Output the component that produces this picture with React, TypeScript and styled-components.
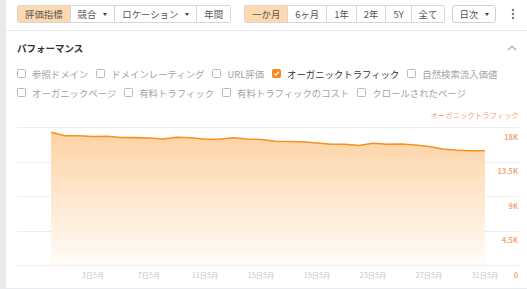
import React from 'react';
import styled, { createGlobalStyle } from 'styled-components';

const Global = createGlobalStyle`
  html, body { margin: 0; padding: 0; }
  body {
    background: #e9eaed;
    font-family: "Noto Sans CJK JP", "Noto Sans", sans-serif;
    width: 527px;
    height: 289px;
    overflow: hidden;
  }
`;

const Page = styled.div`
  margin-left: 6px;
  width: 521px;
  height: 288px;
  background: #fff;
  display: flex;
  flex-direction: column;
`;

const Toolbar = styled.div`
  height: 31px;
  box-sizing: border-box;
  border-bottom: 1px solid #e7e8eb;
  display: flex;
  align-items: flex-start;
  padding: 5px 0 0 11px;
`;

const Group = styled.div<{ $gap?: number }>`
  display: flex;
  border: 1px solid #d6d6d6;
  border-radius: 2px;
  overflow: hidden;
  margin-left: ${(p) => p.$gap ?? 0}px;
`;

const Segment = styled.div<{ $active?: boolean }>`
  display: flex;
  align-items: center;
  gap: 7px;
  height: 16px;
  padding: 0 7px;
  font-size: 9.4px;
  line-height: 16px;
  color: #555;
  background: ${(p) => (p.$active ? '#fed8ae' : '#fff')};
  & + & {
    border-left: 1px solid #d6d6d6;
  }
`;

const Caret = styled.span`
  width: 0;
  height: 0;
  border-left: 2.5px solid transparent;
  border-right: 2.5px solid transparent;
  border-top: 3.5px solid #444;
`;

const Dropdown = styled.div`
  display: flex;
  align-items: center;
  gap: 7px;
  height: 16px;
  margin-left: 7px;
  padding: 0 6px;
  border: 1px solid #d0d0d0;
  border-radius: 3px;
  font-size: 9.4px;
  line-height: 16px;
  color: #555;
`;

const MoreButton = styled.div`
  margin-left: 15px;
  height: 18px;
  display: flex;
  align-items: center;
`;

const Card = styled.div`
  flex: 1;
  display: flex;
  flex-direction: column;
  padding: 0 8px 0 11px;
`;

const Header = styled.div`
  height: 33px;
  display: flex;
  align-items: center;
  justify-content: space-between;
`;

const Title = styled.div`
  font-size: 9.5px;
  font-weight: 700;
  color: #333;
`;

const Collapse = styled.div`
  margin-right: 2px;
  display: flex;
`;

const CheckRow = styled.div`
  height: 19px;
  display: flex;
  align-items: center;
`;

const CheckItem = styled.label<{ $on?: boolean }>`
  display: flex;
  align-items: center;
  gap: 6px;
  margin-right: 8px;
  font-size: 9.4px;
  color: ${(p) => (p.$on ? '#333' : '#a3a3a3')};
  white-space: nowrap;
`;

const Box = styled.span<{ $on?: boolean }>`
  width: 9px;
  height: 9px;
  box-sizing: border-box;
  border-radius: 1.5px;
  border: 1px solid ${(p) => (p.$on ? '#f5891f' : '#b9b9b9')};
  background: ${(p) => (p.$on ? '#f5891f' : '#fff')};
  display: flex;
  align-items: center;
  justify-content: center;
`;

const Legend = styled.div`
  height: 11px;
  padding-top: 7px;
  display: flex;
  justify-content: flex-end;
  font-size: 7.4px;
  line-height: 11px;
  color: #f4a07b;
`;

const ChartSvg = styled.svg`
  display: block;
  font-family: "Noto Sans CJK JP", "Noto Sans", sans-serif;
`;

const metrics1 = [
  { label: '参照ドメイン' },
  { label: 'ドメインレーティング' },
  { label: 'URL評価' },
  { label: 'オーガニックトラフィック', on: true },
  { label: '自然検索流入価値' },
];
const metrics2 = [
  { label: 'オーガニックページ' },
  { label: '有料トラフィック' },
  { label: '有料トラフィックのコスト' },
  { label: 'クロールされたページ' },
];

const data = [
  17.31, 16.86, 16.85, 16.76, 16.79, 16.63, 16.62, 16.57, 16.43, 16.66, 16.6,
  16.4, 16.4, 16.6, 16.43, 16.37, 16.13, 16.11, 16.08, 15.91, 15.74, 15.74,
  15.59, 15.87, 15.74, 15.78, 15.65, 15.46, 15.13, 14.96, 14.91, 14.91,
];

const W = 502;
const H = 167;
const TOP = 7;
const BOTTOM = 145;
const yOf = (v: number) => BOTTOM - (v / 18) * (BOTTOM - TOP);
const xOf = (i: number) => 34 + i * 14;

const Check = ({ label, on }: { label: string; on?: boolean }) => (
  <CheckItem $on={on}>
    <Box $on={on}>
      {on && (
        <svg width="7" height="7" viewBox="0 0 7 7">
          <path d="M1.2 3.6 L2.8 5.1 L5.8 1.8" fill="none" stroke="#fff" strokeWidth="1.3" />
        </svg>
      )}
    </Box>
    {label}
  </CheckItem>
);

const Chart = () => {
  const pts = data.map((v, i) => `${xOf(i)},${yOf(v).toFixed(1)}`);
  const line = 'M' + pts.join(' L');
  const area = `${line} L${xOf(data.length - 1)},${BOTTOM} L${xOf(0)},${BOTTOM} Z`;
  const yTicks = ['18K', '13.5K', '9K', '4.5K', '0'];
  const xTicks = ['3日5月', '7日5月', '11日5月', '15日5月', '19日5月', '23日5月', '27日5月', '31日5月'];
  return (
    <ChartSvg width={W} height={H} viewBox={`0 0 ${W} ${H}`}>
      <defs>
        <linearGradient id="fillGrad" x1="0" y1="0" x2="0" y2="1">
          <stop offset="0%" stopColor="#fdd3a4" />
          <stop offset="100%" stopColor="#fffcf9" />
        </linearGradient>
      </defs>
      {yTicks.map((t, k) => {
        const y = TOP + k * ((BOTTOM - TOP) / 4);
        return <line key={t} x1={0} x2={W} y1={Math.round(y) + 0.5} y2={Math.round(y) + 0.5} stroke="#eeeeee" strokeWidth={1} />;
      })}
      <path d={area} fill="url(#fillGrad)" />
      <path d={line} fill="none" stroke="#f7901e" strokeWidth={1.6} strokeLinejoin="round" />
      {yTicks.map((t, k) => {
        const y = TOP + k * ((BOTTOM - TOP) / 4);
        return (
          <text key={t} x={W - 1} y={k === 4 ? 158 : y + 12.7} textAnchor="end" fontSize="7.4" fontWeight="600" fill="#f5a47c">
            {t}
          </text>
        );
      })}
      {xTicks.map((t, k) => (
        <text key={t} x={76 + 56 * k} y={158} textAnchor="middle" fontSize="7.2" fill="#c6c6c6">
          {t}
        </text>
      ))}
    </ChartSvg>
  );
};

export default function App() {
  return (
    <>
      <Global />
      <Page>
        <Toolbar>
          <Group>
            <Segment $active>評価指標</Segment>
            <Segment>
              競合 <Caret />
            </Segment>
            <Segment>
              ロケーション <Caret />
            </Segment>
            <Segment>年間</Segment>
          </Group>
          <Group $gap={13}>
            <Segment $active>一か月</Segment>
            <Segment>6ヶ月</Segment>
            <Segment>1年</Segment>
            <Segment>2年</Segment>
            <Segment>5Y</Segment>
            <Segment>全て</Segment>
          </Group>
          <Dropdown>
            日次 <Caret />
          </Dropdown>
          <MoreButton>
            <svg width="4" height="12" viewBox="0 0 4 12">
              <circle cx="2" cy="2" r="1.2" fill="#777" />
              <circle cx="2" cy="6" r="1.2" fill="#777" />
              <circle cx="2" cy="10" r="1.2" fill="#777" />
            </svg>
          </MoreButton>
        </Toolbar>
        <Card>
          <Header>
            <Title>パフォーマンス</Title>
            <Collapse>
              <svg width="10" height="6" viewBox="0 0 10 6">
                <path d="M1 5 L5 1.3 L9 5" fill="none" stroke="#a8a8a8" strokeWidth="1.2" />
              </svg>
            </Collapse>
          </Header>
          <CheckRow>
            {metrics1.map((m) => (
              <Check key={m.label} label={m.label} on={m.on} />
            ))}
          </CheckRow>
          <CheckRow>
            {metrics2.map((m) => (
              <Check key={m.label} label={m.label} />
            ))}
          </CheckRow>
          <Legend>オーガニックトラフィック</Legend>
          <Chart />
        </Card>
      </Page>
    </>
  );
}
